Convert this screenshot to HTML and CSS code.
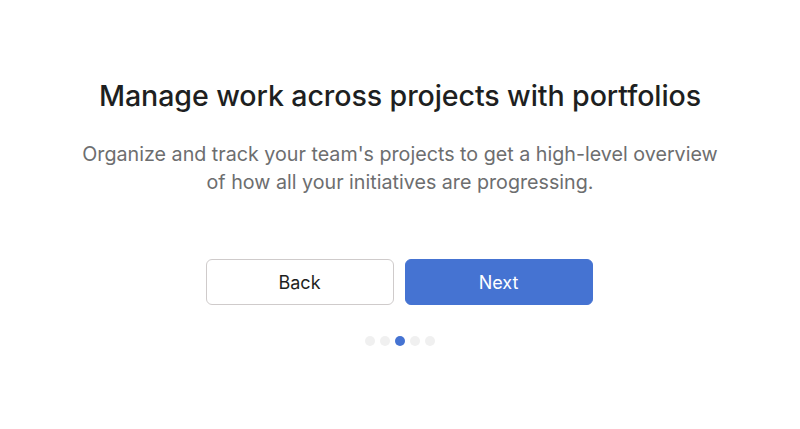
FILE: index.html
```html
<!DOCTYPE html>
<html>
<head>
<meta charset="utf-8">
<link rel="stylesheet" href="styles.css">
</head>
<body>
<main class="page">
  <h1 class="title">Manage work across projects with portfolios</h1>
  <p class="subtitle">Organize and track your team's projects to get a high-level overview<br>of how all your initiatives are progressing.</p>
  <div class="actions">
    <button class="btn btn-secondary">Back</button>
    <button class="btn btn-primary">Next</button>
  </div>
  <div class="dots">
    <span class="dot"></span>
    <span class="dot"></span>
    <span class="dot active"></span>
    <span class="dot"></span>
    <span class="dot"></span>
  </div>
</main>
</body>
</html>
```
FILE: styles.css
```css
html, body {
  margin: 0;
  padding: 0;
  background: #ffffff;
}
body {
  font-family: Inter, "Liberation Sans", Arial, sans-serif;
  width: 800px;
  height: 429px;
  overflow: hidden;
}
.page {
  display: flex;
  flex-direction: column;
  align-items: center;
  padding-top: 78px;
}
.title {
  margin: 0;
  font-size: 28.6px;
  line-height: 36px;
  font-weight: 500;
  color: #1e1f21;
  letter-spacing: -0.1px;
}
.subtitle {
  margin: 26px 0 0;
  font-size: 19.7px;
  line-height: 28px;
  color: #6d6e6f;
  text-align: center;
}
.actions {
  display: flex;
  gap: 11px;
  margin-top: 63px;
  margin-left: -2px;
}
.btn {
  width: 188px;
  height: 46px;
  border-radius: 6px;
  font-family: inherit;
  font-size: 18px;
  cursor: pointer;
}
.btn-secondary {
  background: #ffffff;
  border: 1px solid #cfcbcb;
  color: #1e1f21;
}
.btn-primary {
  background: #4573d2;
  border: 1px solid #4573d2;
  color: #ffffff;
}
.dots {
  display: flex;
  gap: 5px;
  margin-top: 31px;
}
.dot {
  width: 10px;
  height: 10px;
  border-radius: 50%;
  background: #f0f0f0;
}
.dot.active {
  background: #4573d2;
}
```
